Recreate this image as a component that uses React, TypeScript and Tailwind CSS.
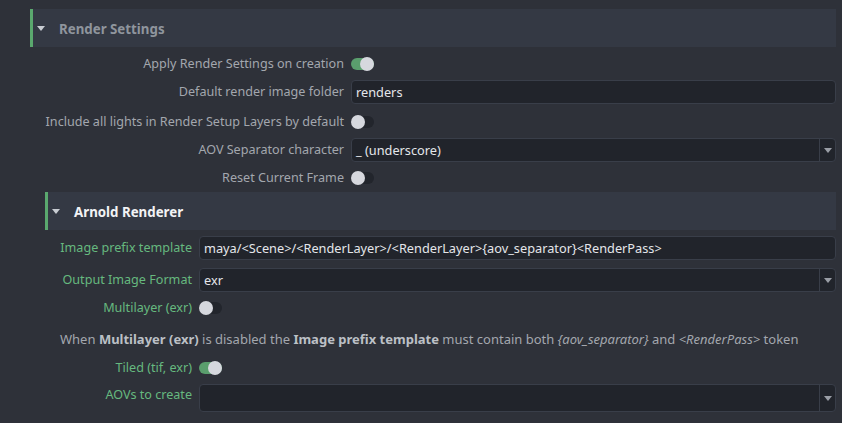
import React from 'react';

const Toggle = ({ on }: { on: boolean }) => (
    <div className={`relative h-[12px] w-[23px] rounded-full ${on ? 'bg-[#5a9e6d]' : 'bg-[#22252c]'}`}>
        <div
            className={`absolute top-[-1px] h-[14px] w-[14px] rounded-full bg-[#d6d8de] ${on ? 'right-0' : 'left-0'}`}
        />
    </div>
);

const TextInput = ({ value }: { value: string }) => (
    <div className="flex h-[24px] w-full items-center rounded-[4px] border border-[#393e49] bg-[#21242b] px-[4px] text-[12.75px] text-[#e4e6ea]">
        {value}
    </div>
);

const Select = ({ value, tall }: { value: string; tall?: boolean }) => (
    <div
        className={`flex w-full items-stretch rounded-[4px] border border-[#393e49] bg-[#21242b] text-[12.75px] text-[#e4e6ea] ${tall ? 'h-[28px]' : 'h-[24px]'}`}
    >
        <div className="flex flex-1 items-center px-[4px]">{value}</div>
        <div className="flex w-[16px] items-center justify-center border-l border-[#393e49]">
            <svg width="8" height="5" viewBox="0 0 8 5">
                <path d="M0 0h8L4 5z" fill="#9a9ea6" />
            </svg>
        </div>
    </div>
);

const Header = ({ title, bright }: { title: string; bright?: boolean }) => (
    <div className="flex h-[38px] items-center border-l-[3px] border-[#5aa86e] bg-[#343944]">
        <svg className="ml-[4px] mt-[1px]" width="8" height="5" viewBox="0 0 8 5">
            <path d="M0 0h8L4 5z" fill="#c8ccd2" />
        </svg>
        <span className={`ml-[14px] mt-[1px] text-[13.3px] font-bold ${bright ? 'text-[#f2f3f5]' : 'text-[#8f959d]'}`}>
            {title}
        </span>
    </div>
);

const Row = ({
    label,
    width,
    green,
    className,
    children,
}: {
    label: string;
    width: string;
    green?: boolean;
    className?: string;
    children: React.ReactNode;
}) => (
    <div className={`flex items-center ${className ?? 'h-[26px]'}`}>
        <div className={`${width} shrink-0 text-right ${green ? 'text-[#66b97f]' : 'text-[#a3a7ae]'}`}>{label}</div>
        <div className="ml-[7px] flex flex-1 items-center">{children}</div>
    </div>
);

export default function App() {
    return (
        <div
            className="h-[423px] w-[842px] overflow-hidden bg-[#2e3139] pr-[6px] text-[12.6px] leading-[18px]"
            style={{ fontFamily: '"Noto Sans", "Open Sans", sans-serif' }}
        >
            <div className="ml-[30px] pt-[9px]">
                <Header title="Render Settings" />

                <div className="flex flex-col pt-[4px]">
                    <Row label="Apply Render Settings on creation" width="w-[314px]">
                        <Toggle on />
                    </Row>
                    <Row label="Default render image folder" width="w-[314px]" className="mt-[2px] h-[26px]">
                        <TextInput value="renders" />
                    </Row>
                    <Row label="Include all lights in Render Setup Layers by default" width="w-[314px]" className="mt-[4px] h-[26px]">
                        <Toggle on={false} />
                    </Row>
                    <Row label="AOV Separator character" width="w-[314px]" className="mt-[2px] h-[26px]">
                        <Select value="_ (underscore)" />
                    </Row>
                    <Row label="Reset Current Frame" width="w-[314px]" className="mt-[2px] h-[26px]">
                        <Toggle on={false} />
                    </Row>
                </div>

                {/* Arnold */}
                <div className="ml-[15px] mt-[1px]">
                    <Header title="Arnold Renderer" bright />

                    <div className="flex flex-col">
                        <Row label="Image prefix template" width="w-[147px]" green className="mt-[4px] h-[28px]">
                            <TextInput value="maya/<Scene>/<RenderLayer>/<RenderLayer>{aov_separator}<RenderPass>" />
                        </Row>
                        <Row label="Output Image Format" width="w-[147px]" green className="mt-[4px] h-[28px]">
                            <Select value="exr" />
                        </Row>
                        <Row label="Multilayer (exr)" width="w-[147px]" green className="mt-[1px] h-[26px]">
                            <Toggle on={false} />
                        </Row>
                        <div className="mt-[6px] flex h-[24px] items-center pl-[15px] text-[13px] text-[#a3a7ae]">
                            <span>
                                When <b className="text-[#bcc0c6]">Multilayer (exr)</b> is disabled the{' '}
                                <b className="text-[#bcc0c6]">Image prefix template</b> must contain both{' '}
                                <i>{'{aov_separator}'}</i> and <i>{'<RenderPass>'}</i> token
                            </span>
                        </div>
                        <Row label="Tiled (tif, exr)" width="w-[147px]" green className="mt-[4px] h-[26px]">
                            <Toggle on />
                        </Row>
                        <div className="mt-[3px] flex h-[28px] items-start">
                            <div className="w-[147px] shrink-0 pt-[2px] text-right text-[#66b97f]">AOVs to create</div>
                            <div className="ml-[7px] flex flex-1">
                                <Select value="" tall />
                            </div>
                        </div>
                    </div>
                </div>
            </div>
        </div>
    );
}
